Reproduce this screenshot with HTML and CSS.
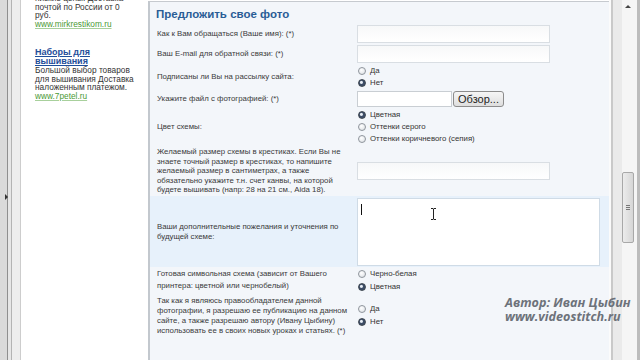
FILE: index.html
```html
<!DOCTYPE html>
<html lang="ru">
<head>
  <meta charset="UTF-8">
  <title>Предложить свое фото</title>
  <link rel="stylesheet" href="styles.css">
</head>
<body>
  <div class="window">
    <div class="frame-edge"><span class="splitter"></span></div>

    <aside class="sidebar">
      <div class="ad ad-cut">
        <p>низкие цены. Доставка<br>почтой по России от 0<br>руб.</p>
        <a class="ad-url" href="#">www.mirkrestikom.ru</a>
      </div>
      <div class="ad">
        <a class="ad-title" href="#">Наборы для<br>вышивания</a>
        <p>Большой выбор товаров<br>для вышивания Доставка<br>наложенным платежом.</p>
        <a class="ad-url" href="#">www.7petel.ru</a>
      </div>
    </aside>

    <main class="panel">
      <h2>Предложить свое фото</h2>
      <form class="photo-form">
        <div class="row row-name">
          <label>Как к Вам обращаться (Ваше имя): (*)</label>
          <input class="field" type="text">
        </div>
        <div class="row row-mail">
          <label>Ваш E-mail для обратной связи: (*)</label>
          <input class="field" type="text">
        </div>
        <div class="row row-sub">
          <label>Подписаны ли Вы на рассылку сайта:</label>
          <div class="options">
            <span class="opt"><input type="radio" name="sub"> Да</span>
            <span class="opt"><input type="radio" name="sub" checked> Нет</span>
          </div>
        </div>
        <div class="row row-file">
          <label>Укажите файл с фотографией: (*)</label>
          <div class="file-pick">
            <input class="file-name" type="text">
            <button type="button">Обзор...</button>
          </div>
        </div>
        <div class="row row-color">
          <label>Цвет схемы:</label>
          <div class="options">
            <span class="opt"><input type="radio" name="color" checked> Цветная</span>
            <span class="opt"><input type="radio" name="color"> Оттенки серого</span>
            <span class="opt"><input type="radio" name="color"> Оттенки коричневого (сепия)</span>
          </div>
        </div>
        <div class="row row-size">
          <label>Желаемый размер схемы в крестиках. Если Вы не<br>знаете точный размер в крестиках, то напишите<br>желаемый размер в сантиметрах, а также<br>обязательно укажите т.н. счет канвы, на которой<br>будете вышивать (напр: 28 на 21 см., Aida 18).</label>
          <input class="field" type="text">
        </div>
        <div class="row row-wish">
          <label>Ваши дополнительные пожелания и уточнения по<br>будущей схеме:</label>
          <div class="textbox">
            <span class="caret"></span>
            <svg class="ibeam" width="7" height="12" viewBox="0 0 7 12">
              <path d="M1 0.5h2l0.5 0.5 0.5-0.5h2M3.5 1v10M1 11.5h2l0.5-0.5 0.5 0.5h2" fill="none" stroke="#222" stroke-width="1"/>
            </svg>
          </div>
        </div>
        <div class="row row-print">
          <label>Готовая символьная схема (зависит от Вашего<br>принтера: цветной или чернобелый)</label>
          <div class="options">
            <span class="opt"><input type="radio" name="print"> Черно-белая</span>
            <span class="opt"><input type="radio" name="print" checked> Цветная</span>
          </div>
        </div>
        <div class="row row-rights">
          <label>Так как я являюсь правообладателем данной<br>фотографии, я разрешаю ее публикацию на данном<br>сайте, а также разрешаю автору (Ивану Цыбину)<br>использовать ее в своих новых уроках и статьях. (*)</label>
          <div class="options">
            <span class="opt"><input type="radio" name="rights"> Да</span>
            <span class="opt"><input type="radio" name="rights" checked> Нет</span>
          </div>
        </div>
      </form>
      <div class="watermark">Автор: Иван Цыбин<br>www.videostitch.ru</div>
    </main>

    <div class="scrollbar">
      <span class="arrow-up"></span>
      <div class="thumb"><span class="grip"></span></div>
    </div>
  </div>
</body>
</html>
```

FILE: styles.css
```css
html, body {
  margin: 0;
  padding: 0;
}
body {
  font-family: 'Liberation Sans', Arial, sans-serif;
  color: #333;
  background-color: #fff;
  width: 640px;
  height: 360px;
  overflow: hidden;
}
.window {
  display: flex;
  height: 360px;
}
.frame-edge {
  width: 21px;
  flex: none;
  position: relative;
  background: linear-gradient(to right, #dadada 0 7px, #8f8f8f 7px 8px, #e6e6e6 8px 11px, #b3b3b3 11px 12px, #ededed 12px 20px, #cdcdcd 20px 21px);
}
.splitter {
  position: absolute;
  left: 5px;
  top: 194px;
  border-left: 3px solid #333;
  border-top: 3px solid transparent;
  border-bottom: 3px solid transparent;
}

/* left column with ads */
.sidebar {
  width: 113px;
  flex: none;
  padding-left: 14px;
  background-color: #fff;
  font-size: 8.3px;
  line-height: 8.5px;
}
.ad {
  margin-bottom: 20px;
}
.ad-cut {
  margin-top: -6px;
}
.ad p {
  margin: 0;
  color: #333;
}
.ad-url {
  color: #4a9a36;
  text-decoration: underline;
  text-decoration-color: #a8d09c;
}
.ad-title {
  display: block;
  color: #1f4e9a;
  font-weight: 700;
  font-size: 9px;
  line-height: 9px;
}

/* main panel */
.panel {
  position: relative;
  width: 459px;
  flex: none;
  margin-top: 1px;
  border-top: 1px solid #c6cacf;
  border-left: 2px solid #c3c8ce;
  background-color: #f3f6fa;
}
.panel h2 {
  margin: 0;
  padding: 4px 0 0 6px;
  height: 18px;
  font-size: 11.5px;
  line-height: 16px;
  color: #2a5d96;
  font-weight: 700;
}
.photo-form {
  font-size: 7.8px;
  line-height: 10px;
}
.row {
  display: grid;
  grid-template-columns: 200px 1fr;
  align-items: center;
  padding-left: 7px;
}
.row label {
  color: #3a3a3a;
  white-space: nowrap;
}
.row-name, .row-mail { height: 20px; }
.row-sub { height: 25px; }
.row-file { height: 19px; }
.row-color { height: 38px; }
.row-size { height: 50px; }
.row-size label { line-height: 9.5px; }
.row-wish {
  height: 71px;
  background-color: #e7f1fb;
}
.row-print { height: 26px; }
.row-print label { line-height: 12px; }
.row-rights { height: 45px; }

.field {
  box-sizing: border-box;
  width: 193px;
  height: 18px;
  margin: 0;
  border: 1px solid #d9dee3;
  background: linear-gradient(#f7f8f9, #fff);
}
.options {
  display: flex;
  flex-direction: column;
}
.opt {
  display: flex;
  align-items: center;
  gap: 4px;
  height: 12px;
  color: #333;
  white-space: nowrap;
}
.row-print .opt, .row-rights .opt { height: 13px; }
.opt input {
  appearance: none;
  box-sizing: border-box;
  width: 8px;
  height: 8px;
  margin: 0 0 0 1px;
  border: 1px solid #8f959c;
  border-radius: 50%;
  background: radial-gradient(circle at 40% 35%, #fff, #d9dde2);
}
.opt input:checked {
  border-color: #3d4650;
  background: radial-gradient(circle at 40% 40%, #e8eef5 0 1px, #3c4c66 2px);
}

.file-pick {
  display: flex;
  align-items: center;
  gap: 1px;
}
.file-name {
  box-sizing: border-box;
  width: 95px;
  height: 16px;
  margin: 0;
  border: 1px solid #c9ced3;
  background-color: #fff;
}
.file-pick button {
  box-sizing: border-box;
  width: 51px;
  height: 16px;
  padding: 0;
  font-family: 'Liberation Sans', Arial, sans-serif;
  font-size: 11px;
  color: #1e1e1e;
  border: 1px solid #8c8c8c;
  border-radius: 3px;
  background: linear-gradient(#f6f6f6, #dedede);
}

.textbox {
  position: relative;
  box-sizing: border-box;
  width: 243px;
  height: 68px;
  margin-top: 1px;
  padding: 5px 0 0 3px;
  border: 1px solid #cfdbe6;
  background-color: #fff;
}
.caret {
  display: block;
  width: 1px;
  height: 11px;
  background-color: #111;
}
.ibeam {
  position: absolute;
  left: 72px;
  top: 9px;
}

.watermark {
  position: absolute;
  z-index: 2;
  left: 355px;
  top: 294px;
  font-family: 'Open Sans', sans-serif;
  font-style: italic;
  font-weight: 700;
  font-size: 12.6px;
  line-height: 14px;
  color: #6d727a;
  white-space: nowrap;
}

/* right scrollbar */
.scrollbar {
  position: relative;
  flex: 1;
  background: linear-gradient(to right, #fbfbfb 0 2px, #c9c9c9 2px 4px, #eaeaea 4px 13px, #f5f5f5 13px 28px, #bcbcbc 28px 31px);
}
.arrow-up {
  position: absolute;
  left: 16px;
  top: 5px;
  border-bottom: 3px solid #444;
  border-left: 3px solid transparent;
  border-right: 3px solid transparent;
}
.thumb {
  position: absolute;
  left: 13px;
  top: 172px;
  box-sizing: border-box;
  width: 12px;
  height: 71px;
  border: 1px solid #a8a8a8;
  border-radius: 2px;
  background: linear-gradient(to right, #ececec, #d6d6d6);
}
.grip {
  position: absolute;
  left: 3px;
  top: 32px;
  width: 4px;
  height: 5px;
  background: repeating-linear-gradient(#777 0 1px, transparent 1px 2px);
}
```
